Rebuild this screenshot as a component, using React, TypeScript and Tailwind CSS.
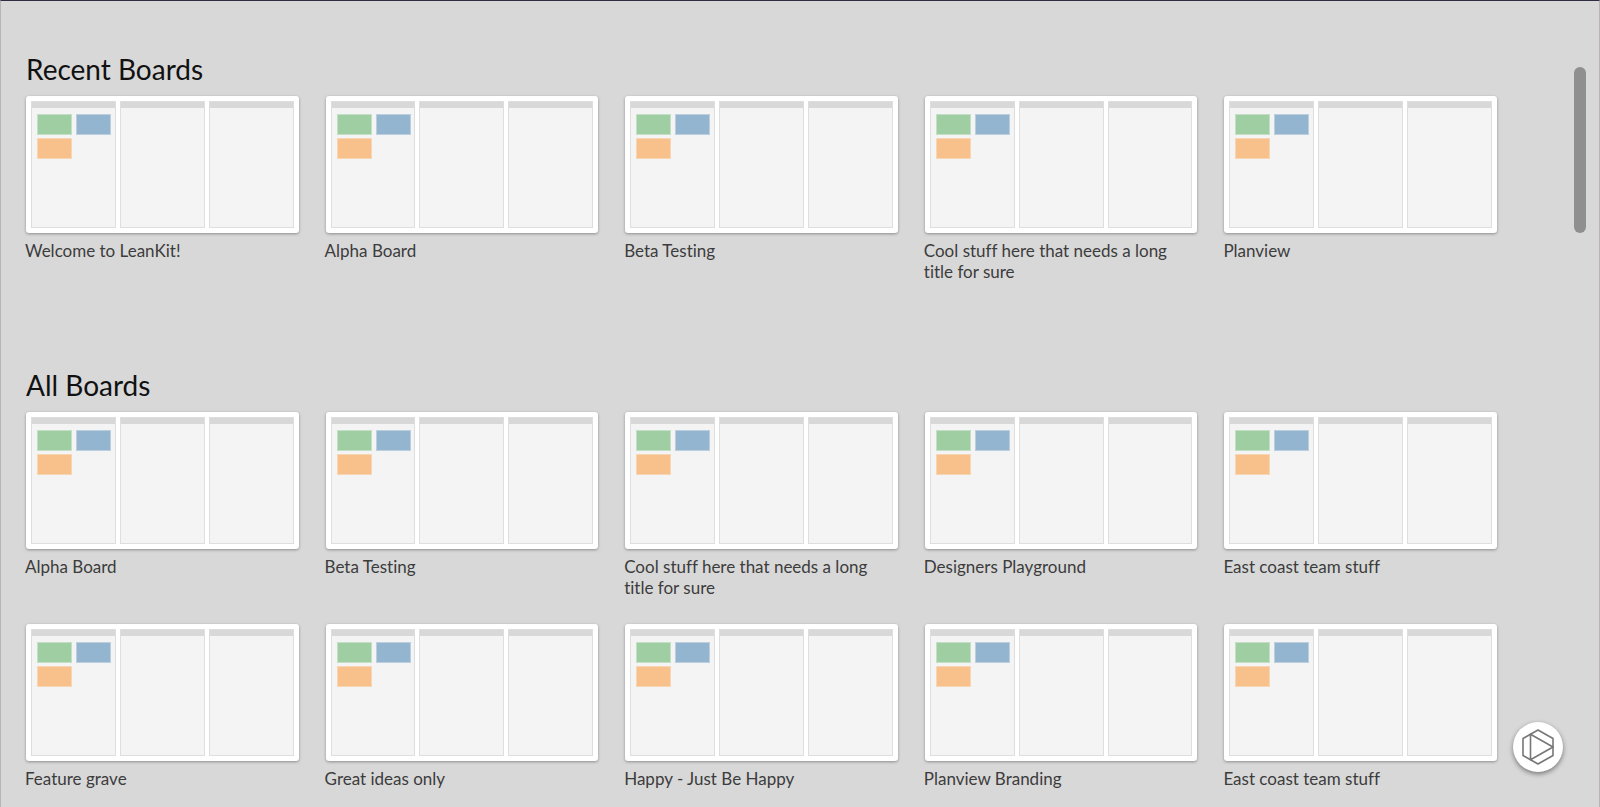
const recentBoards = [
  "Welcome to LeanKit!",
  "Alpha Board",
  "Beta Testing",
  "Cool stuff here that needs a long title for sure",
  "Planview",
];

const allBoards = [
  "Alpha Board",
  "Beta Testing",
  "Cool stuff here that needs a long title for sure",
  "Designers Playground",
  "East coast team stuff",
  "Feature grave",
  "Great ideas only",
  "Happy - Just Be Happy",
  "Planview Branding",
  "East coast team stuff",
];

function Lane({ withCards = false }: { withCards?: boolean }) {
  return (
    <div className="min-w-0 flex-1 border border-[#dedede] bg-[#f4f4f4]">
      <div className="h-1.5 bg-[#d8d8d8]" />
      {withCards && (
        <div className="grid grid-cols-[35px_35px] gap-x-1 gap-y-[3px] pt-1.5 pl-[5px]">
          <div className="h-[21px] border border-[#c3dfc5] bg-[#9fcea3]" />
          <div className="h-[21px] border border-[#bccfde] bg-[#94b5d0]" />
          <div className="h-[21px] border border-[#f7d6b6] bg-[#f8c18c]" />
        </div>
      )}
    </div>
  );
}

function BoardTile({ title }: { title: string }) {
  return (
    <li>
      <a href="#" className="block">
        <div className="flex h-[137px] gap-1 rounded-[3px] bg-white p-[5px] shadow-[0_1px_3px_rgba(0,0,0,0.35)]">
          <Lane withCards />
          <Lane />
          <Lane />
        </div>
        <h3 className="-ml-px mt-[7px] pr-3 text-[17px] leading-[21px] text-[#3c3c3c]">{title}</h3>
      </a>
    </li>
  );
}

function BoardSection({ heading, boards }: { heading: string; boards: string[] }) {
  return (
    <section>
      <h2 className="mb-[11px] text-[28px] leading-8 text-[#111111]">{heading}</h2>
      <ul className="grid grid-cols-5 gap-x-[27px] gap-y-[26px]">
        {boards.map((title, index) => (
          <BoardTile key={index} title={title} />
        ))}
      </ul>
    </section>
  );
}

export default function App() {
  return (
    <div className="min-h-screen border-x border-t border-x-[#b9b3b6] border-t-[#2f2d44] bg-[#d8d8d8] font-['Lato',sans-serif] [font-variant-ligatures:none]">
      <main className="flex flex-col gap-[87px] pt-[52px] pr-[102px] pl-[25px]">
        <BoardSection heading="Recent Boards" boards={recentBoards} />
        <BoardSection heading="All Boards" boards={allBoards} />
      </main>
      <div className="fixed top-[67px] right-3.5 h-[166px] w-3 rounded-full bg-[#8f8f8f]" />
      <button
        type="button"
        aria-label="Open Planview menu"
        className="fixed right-[37px] bottom-[35px] flex size-[50px] items-center justify-center rounded-full bg-white shadow-[0_2px_5px_rgba(0,0,0,0.45)]"
      >
        <svg viewBox="0 0 32 36" className="h-9 w-8" fill="none" stroke="#777777" strokeWidth="1.6" strokeLinejoin="round">
          <path d="M16 1 31 9.5V26.500L16 35 1 26.500V9.500Z" />
          <path d="M8.500 5.200V30.800L31 18Z" />
        </svg>
      </button>
    </div>
  );
}
